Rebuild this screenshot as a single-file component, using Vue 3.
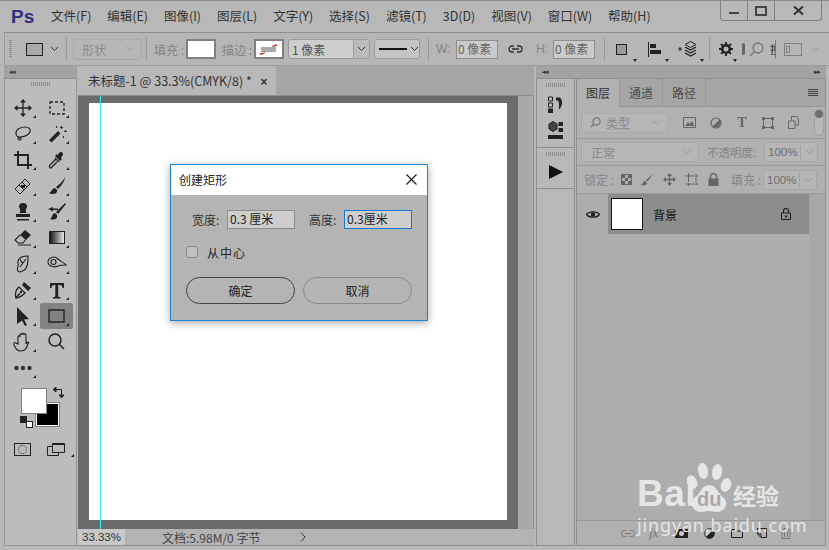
<template>
  <div class="ps">
    <!-- 顶部菜单 -->
    <header class="menubar">
      <span class="logo">Ps</span>
      <nav class="menus">
        <span v-for="m in menus" :key="m">{{ m }}</span>
      </nav>
      <div class="winbtns">
        <span class="winbtn"><i class="min"></i></span>
        <span class="winbtn"><i class="max"></i></span>
        <span class="winbtn close">
          <svg width="11" height="9" viewBox="0 0 11 9"><path d="M1 0.500 10 8.500M10 0.500 1 8.500" stroke="#333" stroke-width="2" /></svg>
        </span>
      </div>
    </header>

    <!-- 选项栏 -->
    <div class="options">
      <span class="grip-v"></span>
      <span class="opt-rect"></span>
      <svg class="chev" width="9" height="6" viewBox="0 0 9 6"><path d="M1 1l3.500 3.500L8 1" fill="none" stroke="#333" /></svg>
      <span class="vline v0"></span>
      <span class="select dim shape">形状<svg width="9" height="6" viewBox="0 0 9 6"><path d="M1 1l3.500 3.500L8 1" fill="none" stroke="#999" /></svg></span>
      <span class="vline v1"></span>
      <span class="dimtext cut">填充 :</span>
      <span class="swatch"></span>
      <span class="dimtext cut stroke-l">描边 :</span>
      <span class="swatch stroke">
        <svg width="22" height="12" viewBox="0 0 22 12">
          <rect x="3" y="4" width="15" height="5" fill="#aaa" />
          <path d="M14 3l5-2v1.500l-4 1.500zM1 11l6-2v1l-4 2z" fill="#d0201f" />
        </svg>
      </span>
      <span class="combo px1"><em>1 像素</em><b><svg width="9" height="6" viewBox="0 0 9 6"><path d="M1 1l3.500 3.500L8 1" fill="none" stroke="#333" /></svg></b></span>
      <span class="combo line"><i></i><svg width="9" height="6" viewBox="0 0 9 6"><path d="M1 1l3.500 3.500L8 1" fill="none" stroke="#333" /></svg></span>
      <span class="vline v15"></span>
      <span class="dimtext wl">W:</span>
      <span class="numbox first">0 像素</span>
      <svg class="link" width="15" height="8" viewBox="0 0 15 8"><path d="M6 1H4a3 3 0 000 6h2M9 1h2a3 3 0 010 6H9M4 4h7" fill="none" stroke="#333" stroke-width="1.300" /></svg>
      <span class="dimtext hl">H:</span>
      <span class="numbox">0 像素</span>
      <span class="vline v2"></span>
      <span class="oicon sq"><i></i></span>
      <span class="oicon al">
        <svg width="14" height="15" viewBox="0 0 14 15"><path d="M0.500 0v15" stroke="#222" /><path d="M2 2h6v4H2zM2 8h11v4H2z" fill="#222" /></svg>
      </span>
      <span class="oicon wide">
        <svg width="19" height="16" viewBox="0 0 19 16"><path d="M0 8h4M2 6v4" stroke="#222" /><path d="M12.500 0.500l5.500 3-5.500 3-5.500-3z" fill="none" stroke="#222" /><path d="M7 6l5.500 3L18 6M7 9l5.500 3L18 9M7 12l5.500 3 5.500-3" fill="none" stroke="#222" stroke-width="1.200" /></svg>
      </span>
      <span class="vline v3"></span>
      <span class="oicon gear">
        <svg width="14" height="14" viewBox="0 0 14 14"><circle cx="7" cy="7" r="3.800" fill="none" stroke="#222" stroke-width="2.600" /><path d="M7 0v14M0 7h14M2 2l10 10M12 2L2 12" stroke="#222" stroke-width="2" stroke-dasharray="2.400 9.200" /></svg>
      </span>
      <span class="bar-cut"></span>
      <svg class="search" width="15" height="15" viewBox="0 0 15 15"><circle cx="9" cy="6" r="5" fill="none" stroke="#777" stroke-width="1.300" /><path d="M5.500 9.500L1 14" stroke="#777" stroke-width="1.500" /></svg>
      <span class="cutglyph">搜</span>
      <span class="panelbtn"><i></i></span>
      <svg class="chev2" width="9" height="6" viewBox="0 0 9 6"><path d="M1 1l3.500 3.500L8 1" fill="none" stroke="#999" /></svg>
    </div>

    <div class="main">
      <!-- 左侧工具栏 -->
      <aside class="toolbar">
        <div class="collapse"><span>◂◂</span></div>
        <div class="tools-inner">
          <div class="grip-h"></div>
          <div class="toolgrid">
            <span v-for="t in tools" :key="t.name" class="tool" :class="{ active: t.active }">
              <svg width="20" height="20" viewBox="0 0 20 20">
                <template v-if="t.name === 'gradient'">
                  <defs>
                    <linearGradient id="gradtool">
                      <stop offset="0" stop-color="#111" />
                      <stop offset="1" stop-color="#eee" />
                    </linearGradient>
                  </defs>
                  <rect x="2.500" y="3.500" width="15" height="12" fill="url(#gradtool)" stroke="#222" />
                </template>
                <path v-if="t.s" :d="t.s" fill="none" stroke="#222" :stroke-width="t.w || 1.300" :stroke-dasharray="t.dash" />
                <path v-if="t.f" :d="t.f" fill="#222" />
              </svg>
              <i v-if="t.more" class="corner"></i>
            </span>
          </div>
          <div class="dots-row">
            <span class="tool">
              <svg width="20" height="20" viewBox="0 0 20 20"><circle cx="3.500" cy="10" r="2.200" fill="#333" /><circle cx="10" cy="10" r="2.200" fill="#333" /><circle cx="16.500" cy="10" r="2.200" fill="#333" /></svg>
              <i class="corner"></i>
            </span>
          </div>
          <div class="colors">
            <span class="bgcolor"></span>
            <span class="fgcolor"></span>
            <svg class="swap" width="11" height="11" viewBox="0 0 11 11"><path d="M0 2.500L3 0v5zM8.500 11L11 8H6zM3 2.500h5.500V8" fill="none" stroke="#222" stroke-width="1" /><path d="M0 2.500L3 0v5zM8.500 11L11 8H6z" fill="#222" /></svg>
            <span class="mini-bg"></span>
            <span class="mini-fg"></span>
          </div>
          <div class="modes">
            <span class="qmask"><i></i></span>
            <span class="screenmode">
              <svg width="18" height="13" viewBox="0 0 18 13"><path d="M0.500 3.500h11v9H0.500z" fill="#bcbcbc" stroke="#222" /><path d="M5.500 0.500h12v9h-12z" fill="#bcbcbc" stroke="#222" /><path d="M5.500 1.500h12" stroke="#222" /></svg>
              <i class="corner"></i>
            </span>
          </div>
        </div>
      </aside>

      <!-- 文档区 -->
      <section class="doc">
        <div class="tabbar">
          <div class="doctab">未标题-1 @ 33.3%(CMYK/8) * <b>×</b></div>
        </div>
        <div class="workspace">
          <div class="paste">
            <div class="canvas"></div>
            <div class="guide"></div>
          </div>
          <div class="vscroll"></div>
        </div>
        <div class="statusbar">
          <span class="zoomval">33.33%</span>
          <span class="docinfo">文档:5.98M/0 字节</span>
          <span class="arrow">
            <svg width="6" height="10" viewBox="0 0 6 10"><path d="M1 0.500L5 5 1 9.500" fill="none" stroke="#333" /></svg>
          </span>
        </div>
      </section>

      <!-- 右侧面板 -->
      <aside class="dock">
        <div class="dockhead"><span>◂◂</span><span>▸▸</span></div>
        <div class="dockbody">
          <div class="strip">
            <div class="strip-group first">
              <div class="grip-h short"></div>
              <svg class="s1" width="16" height="17" viewBox="0 0 16 17"><path d="M0.500 1h4v4h-4zM0.500 7h4v4h-4z" fill="none" stroke="#222" /><path d="M0 12.500h5V17H0z" fill="#222" /><path d="M8 1.500h4c3 3 3 8-1 12-.500-1 1-6-1-9H8z" fill="#222" /></svg>
              <svg class="s2" width="16" height="18" viewBox="0 0 16 18"><path d="M0 14h15v4H0z" fill="#222" /><path d="M1 3l4-2.500L9 3v5l-4 2.500L1 8z" fill="#444" stroke="#222" /><path d="M10.500 1H15v4h-4.500zM10.500 7H15v4h-4.500z" fill="#222" /></svg>
            </div>
            <div class="strip-group second">
              <div class="grip-h short"></div>
              <svg class="play" width="14" height="14" viewBox="0 0 14 14"><path d="M0 0l14 7-14 7z" fill="#111" /></svg>
            </div>
          </div>
          <div class="panel">
            <div class="ptabs">
              <span class="ptab on">图层</span>
              <span class="ptab">通道</span>
              <span class="ptab">路径</span>
              <span class="pmenu"><i></i><i></i><i></i><i></i></span>
            </div>
            <div class="prow filter">
              <span class="select ftype">
                <svg width="11" height="11" viewBox="0 0 11 11"><circle cx="6.500" cy="4.500" r="3.600" fill="none" stroke="#777" stroke-width="1.200" /><path d="M4 7L1 10" stroke="#777" stroke-width="1.400" /></svg>
                <em>类型</em>
                <svg class="sc" width="9" height="6" viewBox="0 0 9 6"><path d="M1 1l3.500 3.500L8 1" fill="none" stroke="#999" /></svg>
              </span>
              <svg class="fi fi1" width="13" height="11" viewBox="0 0 13 11"><path d="M0.500 0.500h12v10H.5z" fill="none" stroke="#666" /><path d="M2 9l3-4 2 2 2-3 2.500 5z" fill="#666" /></svg>
              <svg class="fi fi2" width="12" height="12" viewBox="0 0 12 12"><circle cx="6" cy="6" r="5" fill="none" stroke="#666" stroke-width="1.200" /><path d="M9.500 2.500a5 5 0 01-7 7z" fill="#666" /></svg>
              <span class="fi fi3">T</span>
              <svg class="fi fi4" width="12" height="12" viewBox="0 0 12 12"><path d="M1.500 1.500h9v9h-9z" fill="none" stroke="#666" /><path d="M0 0h3v3H0zM9 0h3v3H9zM0 9h3v3H0zM9 9h3v3H9z" fill="#666" /></svg>
              <svg class="fi fi5" width="11" height="13" viewBox="0 0 11 13"><path d="M3.500 4V0.500h5L10.500 3v6H7" fill="none" stroke="#666" /><path d="M0.500 5h6.500v7.500H0.500z" fill="none" stroke="#666" /></svg>
              <span class="ftoggle"><i></i></span>
            </div>
            <div class="prow blend">
              <span class="select mode">正常<svg width="9" height="6" viewBox="0 0 9 6"><path d="M1 1l3.500 3.500L8 1" fill="none" stroke="#999" /></svg></span>
              <span class="dimtext opac">不透明度:</span>
              <span class="pct"><em>100%</em><b><svg width="9" height="6" viewBox="0 0 9 6"><path d="M1 1l3.500 3.500L8 1" fill="none" stroke="#999" /></svg></b></span>
            </div>
            <div class="prow lock">
              <span class="dimtext lockl">锁定 :</span>
              <svg class="li" width="11" height="11" viewBox="0 0 11 11"><path d="M0.500 0.500h10v10H.5z" fill="#aaa" stroke="#666" /><path d="M1 1h3v3H1zM7 1h3v3H7zM4 4h3v3H4zM1 7h3v3H1zM7 7h3v3H7z" fill="#666" /></svg>
              <svg class="li" width="13" height="13" viewBox="0 0 13 13"><path d="M12.500 0.500L5 7l1.500 1.500zM4 8c-2 0-2 3-4 4 3 1 6 0 6-2.500z" fill="#666" /></svg>
              <svg class="li" width="13" height="13" viewBox="0 0 13 13"><path d="M6.500 1v11M1 6.500h11" stroke="#666" stroke-width="1.300" /><path d="M6.500 0L9 3H4zM6.500 13L4 10h5zM0 6.500L3 4v5zM13 6.500L10 9V4z" fill="#666" /></svg>
              <svg class="li" width="14" height="13" viewBox="0 0 14 13"><path d="M3.500 0v13M0 3h13M11 1v11M1 11h12" stroke="#666" stroke-dasharray="9 1" fill="none" /></svg>
              <svg class="li" width="11" height="13" viewBox="0 0 11 13"><path d="M2.500 6V3.500a3 3 0 016 0V6" fill="none" stroke="#666" stroke-width="1.400" /><path d="M0.500 5.500h10V13H.5z" fill="#666" /></svg>
              <span class="dimtext cut filll">填充 :</span>
              <span class="pct"><em>100%</em><b><svg width="9" height="6" viewBox="0 0 9 6"><path d="M1 1l3.500 3.500L8 1" fill="none" stroke="#999" /></svg></b></span>
            </div>
            <div class="layers">
              <div class="layer-wrap">
                <div class="eye">
                  <svg width="14" height="9" viewBox="0 0 14 9"><path d="M0.500 4.500C3 1 11 1 13.500 4.500 11 8 3 8 0.500 4.500z" fill="none" stroke="#222" stroke-width="1.300" /><circle cx="7" cy="4.500" r="2.200" fill="#222" /></svg>
                </div>
                <div class="layer">
                  <span class="thumb"></span>
                  <span class="lname">背景</span>
                  <svg width="10" height="12" viewBox="0 0 10 12"><path d="M2.500 5V3a2.500 2.500 0 015 0v2" fill="none" stroke="#222" stroke-width="1.200" /><path d="M0.500 5h9v6.500h-9z" fill="none" stroke="#222" /><path d="M4 7.500h2v2H4z" fill="#222" /></svg>
                </div>
              </div>
            </div>
            <div class="pfoot">
              <svg width="14" height="7" viewBox="0 0 14 7"><path d="M5.500 0.500H3.500a3 3 0 000 6h2M8.500 0.500h2a3 3 0 010 6h-2M4 3.500h6" fill="none" stroke="#777" /></svg>
              <span class="fx">fx</span>
              <svg width="13" height="9" viewBox="0 0 13 9"><path d="M0 0h13v9H0z" fill="#222" /><circle cx="6.500" cy="4.500" r="2.500" fill="#ccc" /></svg>
              <svg class="adj" width="11" height="11" viewBox="0 0 11 11"><circle cx="5.500" cy="5.500" r="4.800" fill="#ccc" stroke="#222" /><path d="M9 2a4.800 4.800 0 01-7 7z" fill="#222" /></svg>
              <svg width="12" height="9" viewBox="0 0 12 9"><path d="M0.500 8.500V0.500h4l1 1.500h6v6.500z" fill="none" stroke="#222" /></svg>
              <svg width="10" height="10" viewBox="0 0 10 10"><path d="M0.500 0.500h9v9H4L.5 6z" fill="none" stroke="#222" /><path d="M0.500 6H4v3.500" fill="none" stroke="#222" /></svg>
              <svg width="10" height="11" viewBox="0 0 10 11"><path d="M0 2h10M3 2V.5h4V2M1 3v7.500h8V3M3.500 4v5M6.500 4v5" fill="none" stroke="#777" /></svg>
            </div>
          </div>
        </div>
      </aside>
    </div>

    <!-- 对话框 -->
    <div class="dialog">
      <div class="dlg-title">
        <span>创建矩形</span>
        <svg width="11" height="11" viewBox="0 0 11 11"><path d="M0.500 0.500l10 10M10.500 0.500l-10 10" stroke="#111" stroke-width="1.100" /></svg>
      </div>
      <div class="dlg-body">
        <div class="dlg-row">
          <label>宽度:</label>
          <span class="dlg-input">0.3 厘米</span>
          <label class="second-l">高度:</label>
          <span class="dlg-input focus">0.3厘米</span>
        </div>
        <div class="dlg-check"><i></i><span>从中心</span></div>
        <div class="dlg-btns">
          <span class="dlg-btn primary">确定</span>
          <span class="dlg-btn">取消</span>
        </div>
      </div>
    </div>

    <!-- 水印 -->
    <div class="watermark">
      <div class="wm-top">
        <span class="wm-bai">Bai</span>
        <svg class="wm-paw" width="46" height="54" viewBox="0 0 46 54">
          <ellipse cx="5" cy="20" rx="5" ry="7" transform="rotate(-25 5 20)" fill="#e6e6e6" />
          <ellipse cx="16" cy="9" rx="5" ry="8" transform="rotate(-10 16 9)" fill="#e6e6e6" />
          <ellipse cx="30" cy="10" rx="5" ry="8" transform="rotate(10 30 10)" fill="#e6e6e6" />
          <ellipse cx="39" cy="23" rx="5" ry="7" transform="rotate(20 39 23)" fill="#e6e6e6" />
          <path d="M22 23c8 0 9 9 14 12 6 5 3 15-6 15-3 0-5-1-8-1s-5 1-8 1C5 50 2 40 8 35c6-3 6-12 14-12z" fill="#e6e6e6" />
        </svg>
        <span class="wm-du">du</span>
        <span class="wm-cn">经验</span>
      </div>
      <div class="wm-url">jingyan.baidu.com</div>
    </div>
  </div>
</template>

<script setup>
// 工具栏图标，两列排列，按截图顺序
const menus = ['文件(F)', '编辑(E)', '图像(I)', '图层(L)', '文字(Y)', '选择(S)', '滤镜(T)', '3D(D)', '视图(V)', '窗口(W)', '帮助(H)']

const tools = [
  { name: 'move', more: true, s: 'M10 2v16M2 10h16', f: 'M10 1l3 3.500H7zM10 19l-3-3.500h6zM1 10l3.500-3v6zM19 10l-3.500 3v-6z' },
  { name: 'marquee', more: true, s: 'M3 4h14v12H3z', dash: '3 2', w: 1.300 },
  { name: 'lasso', more: true, s: 'M3 9c0-4 5-6 9-6s6 2 5 5-6 5-10 5-4-2-4-4zM6 13c-2 1-1 3 1 3s1-3-1-2', w: 1.200 },
  { name: 'wand', more: true, f: 'M2 16l9-9 2.500 2.500-9 9zM14 2h1v3h-1zM13 3h3v1h-3zM18 6h1v2h-1zM17 7h3v.8h-3zM16 12h1v2h-1zM9 2h1v2H9z' },
  { name: 'crop', more: true, w: 2, s: 'M5 1v14h14M1 5h14v14' },
  { name: 'eyedropper', more: true, s: 'M9 9l-6 6c-1 1-1 3 1 3l6-6M8 8l4 4', f: 'M12 3c2-3 6 1 3 3l-1 2 1 1-2 2-5-5 2-2 1 1z' },
  { name: 'heal', more: true, s: 'M2 13L12 3l5 5L7 18zM6 9l5 5M9 6l5 5', f: 'M8 9h4v3H8z', w: 1 },
  { name: 'brush', more: true, f: 'M18 1c-1 3-6 8-9 10l2 2c3-3 7-8 7-12zM8 12c-3 0-3 4-6 5 3 2 9 1 8-3z' },
  { name: 'stamp', more: true, f: 'M10 1a3.500 3.500 0 013 6c-.500 1 0 3 .500 4H6.500c.500-1 1-3 .500-4a3.500 3.500 0 013-6zM3 12h14v3H3zM4 17h12v1.500H4z' },
  { name: 'history', more: true, f: 'M18 1l1 1-8 10-2-2zM8 11c-3 0-2 4-5 6 3 1 8 1 7-4zM1 7l5-2v1.500h5V8H6v1.500z' },
  { name: 'eraser', more: true, s: 'M7 7l-5 5 3 3h5l3-4M5 17h13', f: 'M12 2l6 5-5 5-6-5z', w: 1.100 },
  { name: 'gradient', more: true },
  { name: 'smudge', more: true, s: 'M15 2c-4 0-9 1-10 5-1 2 1 3 0 5-1 3-1 6 2 6 5-1 8-5 8-12zM13 5l-6 8M7 5c1 2 1 3 3 4', w: 1.100 },
  { name: 'dodge', more: true, s: 'M1 8c0-4 6-7 10-3 2 2 5 3 8 6-3 0-5 0-8 1-4 2-10 0-10-4zM9 8a2.500 2.500 0 10-5 0 2.500 2.500 0 005 0z', w: 1.100 },
  { name: 'pen', more: true, s: 'M3 18c-1-4-1-8 3-11l6 6c-3 3-6 5-9 5zM3 18l4-5', f: 'M11 2l7 6-3 3-6-6zM7 11h2v2H7z', w: 1.300 },
  { name: 'text', more: true, f: 'M3 3h14v5h-1.500c0-2-1-3-3-3h-1.300v11c0 1 .800 1 2.300 1v1.500H6V17c1.500 0 2.300 0 2.300-1V5H7.500c-2 0-3 1-3 3H3z' },
  { name: 'select', more: true, f: 'M4 1l12 12-5 .500 3 5.500-2 1-3-5.500-5 3.500z' },
  { name: 'rect', more: true, active: true, s: 'M2 4h15v12H2z', w: 1.400 },
  { name: 'hand', more: true, s: 'M5 12V5c0-1.500 2-1.500 2 0V3c0-1.500 2-1.500 2 0v-.500c0-1.500 2-1.500 2 0V3c0-1.500 2-1.500 2 0v9c1-2 4-3 2 0-2 5-3 7-7 7s-5-2-7-6c-1-2 1-3 2-2z', w: 1.100 },
  { name: 'zoom', s: 'M8 2a6 6 0 100 12A6 6 0 008 2zM12 12l5 5', w: 1.500 }
]
</script>

<style>
html, body {
  margin: 0;
  background: #b8b8b8;
}
</style>

<style scoped>
.ps {
  position: relative;
  width: 829px;
  height: 550px;
  overflow: hidden;
  display: flex;
  flex-direction: column;
  background: #b8b8b8;
  font-family: "Noto Sans CJK SC", "Liberation Sans", sans-serif;
  color: #222;
  font-size: 12px;
}

/* 菜单栏 */
.menubar {
  height: 32px;
  flex: none;
  display: flex;
  align-items: center;
  border-top: 1px solid #8c8c8c;
  box-sizing: border-box;
}
.logo {
  width: 51px;
  padding-left: 11px;
  box-sizing: border-box;
  font: bold 19px "Liberation Sans", sans-serif;
  color: #31307f;
  flex: none;
}
.menus {
  display: flex;
  gap: 15.900px;
  font-size: 12.500px;
  color: #333;
  margin-top: -2px;
}
.winbtns {
  margin-left: auto;
  margin-right: 7px;
  align-self: flex-start;
  display: flex;
  height: 19px;
  border: 1px solid #808080;
  border-top: none;
  border-radius: 0 0 4px 4px;
}
.winbtn {
  width: 26px;
  display: flex;
  align-items: center;
  justify-content: center;
  border-right: 1px solid #808080;
}
.winbtn.close {
  width: 46px;
  border-right: none;
}
.min {
  width: 10px;
  height: 2px;
  margin-top: 5px;
  background: #444;
}
.max {
  width: 8px;
  height: 6px;
  border: 2px solid #444;
}

/* 选项栏 */
.options {
  height: 34px;
  margin: 0 0 0 4px;
  flex: none;
  display: flex;
  align-items: center;
  box-sizing: border-box;
  border-top: 1px solid #8e8e8e;
  border-left: 1px solid #9b9b9b;
  border-bottom: 1px solid #9b9b9b;
  background: #b6b6b6;
}
.grip-v {
  width: 3px;
  height: 18px;
  margin-left: 4px;
  background: repeating-linear-gradient(#8e8e8e 0 1px, transparent 1px 2px);
}
.opt-rect {
  width: 15px;
  height: 11px;
  margin-left: 14px;
  border: 1px solid #222;
  background: #aaa;
}
.chev {
  margin-left: 7px;
}
.vline {
  width: 1px;
  height: 24px;
  background: #9a9a9a;
  flex: none;
}
.v0 {
  margin: 0 6px 0 7px;
}
.v1 {
  margin: 0 7px 0 4px;
}
.v15 {
  margin: 0 7px 0 8px;
}
.v2 {
  margin: 0 11px 0 9px;
}
.v3 {
  margin: 0 9px 0 12px;
}
.select {
  display: inline-flex;
  align-items: center;
  box-sizing: border-box;
  border: 1px solid #a9a9a9;
  border-radius: 3px;
  background: #b6b6b6;
  color: #8a8a8a;
  flex: none;
}
.select.shape {
  width: 69px;
  height: 21px;
  justify-content: space-between;
  padding: 0 6px 0 8px;
}
.dimtext {
  color: #848484;
  font-size: 12px;
  white-space: nowrap;
  flex: none;
}
.dimtext.cut {
  width: 32px;
}
.swatch {
  width: 30px;
  height: 20px;
  flex: none;
  box-sizing: border-box;
  border: 2px solid #808080;
  background: #fff;
  display: flex;
  align-items: center;
  justify-content: center;
}
.stroke-l {
  margin-left: 6px;
}
.combo {
  display: flex;
  align-items: center;
  box-sizing: border-box;
  height: 20px;
  border: 1px solid #9a9a9a;
  border-radius: 3px;
  background: #cecece;
  margin-left: 4px;
  flex: none;
}
.combo em {
  flex: 1;
  font-style: normal;
  padding-left: 3px;
  color: #555;
}
.combo b {
  width: 15px;
  height: 18px;
  border-left: 1px solid #9a9a9a;
  background: #bbb;
  display: flex;
  align-items: center;
  justify-content: center;
  border-radius: 0 3px 3px 0;
}
.px1 {
  width: 82px;
}
.line {
  width: 46px;
  background: #c4c4c4;
  gap: 3px;
  padding-left: 4px;
}
.line i {
  width: 28px;
  height: 2px;
  background: #111;
}
.wl,
.hl {
  width: 14px;
  font-family: "Liberation Sans", sans-serif;
}
.numbox {
  width: 42px;
  height: 19px;
  box-sizing: border-box;
  margin-left: 3px;
  border: 1px solid #8e8e8e;
  background: #cacaca;
  color: #666;
  line-height: 16px;
  padding-left: 1px;
  white-space: nowrap;
  flex: none;
}
.numbox.first {
  margin-left: 6px;
}
.link {
  margin: 0 13px 0 10px;
  flex: none;
}
.oicon {
  position: relative;
  width: 14px;
  height: 15px;
  flex: none;
  display: flex;
  align-items: center;
  justify-content: center;
}
.oicon::after {
  content: "";
  position: absolute;
  right: -7px;
  bottom: -5px;
  border: 2.500px solid transparent;
  border-top: 3px solid #222;
  border-bottom: none;
}
.oicon.sq {
  margin-right: 18px;
  justify-content: flex-start;
}
.oicon.sq i {
  width: 9px;
  height: 9px;
  border: 1px solid #222;
  background: #9a9a9a;
}
.oicon.al {
  margin-right: 16px;
}
.oicon.wide {
  width: 19px;
}
.oicon.gear {
  margin-right: 8px;
}
.oicon.gear::after {
  right: -4px;
}
.bar-cut {
  width: 3px;
  height: 12px;
  border-radius: 2px;
  background: #666;
  margin-left: 1px;
  flex: none;
}
.search {
  margin-left: 4px;
  flex: none;
}
.cutglyph {
  width: 5px;
  margin-left: 6px;
  overflow: hidden;
  font-size: 11px;
  line-height: 18px;
  color: #222;
  border-right: 1px solid #777;
  white-space: nowrap;
  flex: none;
}
.panelbtn {
  width: 15px;
  height: 11px;
  margin-left: 8px;
  border: 1px solid #808080;
  display: flex;
  align-items: center;
  padding-left: 1px;
  flex: none;
}
.panelbtn i {
  width: 2px;
  height: 5px;
  border: 1px solid #808080;
}
.chev2 {
  margin-left: 9px;
  flex: none;
}

.main {
  flex: 1;
  min-height: 0;
  display: flex;
}

/* 工具栏 */
.toolbar {
  width: 74px;
  flex: none;
  margin-left: 4px;
  padding-right: 1px;
  box-sizing: border-box;
  display: flex;
  flex-direction: column;
  padding-bottom: 4px;
}
.collapse {
  height: 12px;
  flex: none;
  background: #a2a2a2;
  border-bottom: 1px solid #8f8f8f;
  font-size: 7px;
  line-height: 11px;
  padding-left: 5px;
  color: #333;
  letter-spacing: -1px;
  overflow: hidden;
}
.tools-inner {
  flex: 1;
  border-left: 1px solid #959595;
  border-right: 1px solid #959595;
  border-bottom: 1px solid #959595;
  background: #bcbcbc;
}
.grip-h {
  width: 20px;
  height: 4px;
  margin: 3px auto 0;
  background: repeating-linear-gradient(90deg, #8e8e8e 0 1px, transparent 1px 2px);
}
.grip-h.short {
  margin-top: 4px;
}
.toolgrid {
  margin-top: 9px;
  display: grid;
  grid-template-columns: 35px 33px;
  grid-auto-rows: 26px;
}
.tool {
  position: relative;
  display: flex;
  align-items: center;
  justify-content: center;
  height: 26px;
  border-radius: 2px;
}
.tool.active {
  background: #828282;
}
.corner {
  position: absolute;
  right: 4px;
  bottom: 3px;
  border-left: 3px solid transparent;
  border-bottom: 3px solid #222;
}
.dots-row {
  width: 35px;
}
.colors {
  position: relative;
  height: 45px;
  margin-top: 6px;
}
.bgcolor {
  position: absolute;
  left: 31px;
  top: 16px;
  width: 21px;
  height: 21px;
  border: 1px solid #fff;
  outline: 1px solid #808080;
  background: #000;
}
.fgcolor {
  position: absolute;
  left: 16px;
  top: 1px;
  width: 24px;
  height: 24px;
  border: 1px solid #808080;
  background: #fff;
}
.swap {
  position: absolute;
  left: 48px;
  top: 0;
}
.mini-bg {
  position: absolute;
  left: 21px;
  top: 34px;
  width: 5px;
  height: 5px;
  border: 1px solid #222;
  background: #fff;
}
.mini-fg {
  position: absolute;
  left: 15px;
  top: 29px;
  width: 7px;
  height: 7px;
  background: #222;
}
.modes {
  display: flex;
  align-items: center;
  margin: 11px 0 0 9px;
  gap: 16px;
}
.qmask {
  width: 15px;
  height: 11px;
  border: 1px solid #222;
  display: flex;
  align-items: center;
  justify-content: center;
}
.qmask i {
  width: 7px;
  height: 7px;
  border: 1px dotted #333;
  border-radius: 50%;
}
.screenmode {
  position: relative;
  display: flex;
  padding-right: 6px;
}
.screenmode .corner {
  right: -3px;
  bottom: -1px;
}

/* 文档区 */
.doc {
  width: 456px;
  flex: none;
  display: flex;
  flex-direction: column;
  padding-bottom: 4px;
  box-sizing: border-box;
}
.tabbar {
  height: 30px;
  flex: none;
  background: #a5a5a5;
  border-bottom: 1px solid #8f8f8f;
  box-sizing: border-box;
  display: flex;
}
.doctab {
  width: 198px;
  background: #b8b8b8;
  line-height: 30px;
  padding-left: 10px;
  box-sizing: border-box;
  white-space: nowrap;
  color: #333;
  font-size: 12.500px;
}
.doctab b {
  margin-left: 6px;
  font: bold 12px "Liberation Sans", sans-serif;
}
.workspace {
  flex: 1;
  min-height: 0;
  display: flex;
}
.paste {
  position: relative;
  flex: 1;
  background: #6b6b6b;
  padding: 7px 11px;
  box-sizing: border-box;
}
.canvas {
  width: 418px;
  height: 417px;
  background: #fff;
}
.guide {
  position: absolute;
  left: 22px;
  top: 0;
  bottom: 0;
  width: 1px;
  background: #2ef5f5;
}
.vscroll {
  width: 17px;
  box-sizing: border-box;
  background: #a9a9a9;
  border-right: 1px solid #8f8f8f;
}
.statusbar {
  height: 17px;
  flex: none;
  display: flex;
  align-items: center;
  background: #b3b3b3;
  border-bottom: 1px solid #8f8f8f;
  box-sizing: border-box;
  font-size: 12px;
}
.zoomval {
  width: 47px;
  height: 16px;
  line-height: 16px;
  background: #c8c8c8;
  text-align: center;
  font-family: "Liberation Sans", sans-serif;
  font-size: 11.500px;
  color: #333;
  flex: none;
}
.docinfo {
  margin-left: 37px;
  color: #444;
  width: 135px;
}
.arrow {
  display: flex;
  margin-left: 3px;
}

/* 面板 */
.dock {
  flex: 1;
  margin-left: 2px;
  display: flex;
  flex-direction: column;
  padding-bottom: 4px;
  box-sizing: border-box;
}
.dockhead {
  height: 12px;
  flex: none;
  display: flex;
  justify-content: space-between;
  padding: 0 6px;
  margin-right: 3px;
  background: #a2a2a2;
  border-bottom: 1px solid #8f8f8f;
  font-size: 7px;
  line-height: 11px;
  letter-spacing: -1px;
  color: #333;
  overflow: hidden;
}
.dockbody {
  flex: 1;
  min-height: 0;
  display: flex;
}
.strip {
  width: 39px;
  flex: none;
  background: #b8b8b8;
  border-left: 1px solid #8f8f8f;
  border-right: 1px solid #8f8f8f;
  border-bottom: 1px solid #8f8f8f;
  box-sizing: border-box;
}
.strip-group {
  display: flex;
  flex-direction: column;
  align-items: center;
  border-bottom: 1px solid #8f8f8f;
  box-sizing: border-box;
}
.strip-group.first {
  height: 69px;
}
.strip-group.second {
  height: 41px;
}
.s1 {
  margin-top: 9px;
}
.s2 {
  margin-top: 8px;
}
.play {
  margin-top: 9px;
}
.panel {
  width: 248px;
  margin-left: 1px;
  display: flex;
  flex-direction: column;
  background: #b1b1b1;
  border-left: 1px solid #8f8f8f;
  border-right: 1px solid #8f8f8f;
  border-bottom: 1px solid #8f8f8f;
}
.ptabs {
  height: 28px;
  flex: none;
  display: flex;
  align-items: center;
  background: #a5a5a5;
  border-bottom: 1px solid #959595;
  box-sizing: border-box;
}
.ptab {
  width: 43px;
  height: 28px;
  line-height: 27px;
  text-align: center;
  border-right: 1px solid #959595;
  color: #4a4a4a;
  box-sizing: border-box;
}
.ptab.on {
  background: #b1b1b1;
  color: #333;
}
.pmenu {
  margin-left: auto;
  margin-right: 7px;
  display: flex;
  flex-direction: column;
  gap: 1px;
}
.pmenu i {
  width: 10px;
  height: 1px;
  background: #444;
}
.prow {
  display: flex;
  align-items: center;
  box-sizing: border-box;
  border-bottom: 1px solid #999;
  flex: none;
}
.filter {
  height: 32px;
  padding-left: 4px;
}
.ftype {
  width: 87px;
  height: 20px;
  gap: 5px;
  padding: 0 6px 0 8px;
}
.ftype em {
  font-style: normal;
  text-decoration: underline;
  text-decoration-color: #aaa;
}
.sc {
  margin-left: auto;
}
.fi {
  margin-left: 14px;
  flex: none;
}
.fi1 {
  margin-left: 15px;
}
.fi3 {
  font: bold 14px "Liberation Serif", serif;
  color: #666;
  width: 12px;
  text-align: center;
}
.ftoggle {
  margin-left: 15px;
  width: 8px;
  height: 25px;
  border: 1px solid #a2a2a2;
  border-radius: 5px;
  position: relative;
  background: #b8b8b8;
  flex: none;
}
.ftoggle i {
  position: absolute;
  left: 0;
  top: 0;
  width: 8px;
  height: 8px;
  border-radius: 50%;
  background: #6e6e6e;
}
.blend {
  height: 27px;
  padding-left: 4px;
}
.mode {
  width: 118px;
  height: 20px;
  justify-content: space-between;
  padding: 0 6px 0 9px;
}
.opac {
  margin-left: 8px;
  font-size: 11.500px;
  width: 57px;
}
.pct {
  display: flex;
  align-items: center;
  width: 54px;
  height: 20px;
  box-sizing: border-box;
  border: 1px solid #a5a5a5;
  border-radius: 3px;
  background: #b6b6b6;
  flex: none;
}
.pct em {
  flex: 1;
  font-style: normal;
  color: #6e6e6e;
  padding-left: 3px;
  font-family: "Liberation Sans", sans-serif;
  font-size: 11.500px;
}
.pct b {
  width: 16px;
  height: 18px;
  display: flex;
  align-items: center;
  justify-content: center;
  border-left: 1px solid #a5a5a5;
}
.lock {
  height: 28px;
  padding-left: 7px;
}
.lockl {
  width: 37px;
}
.li {
  margin-right: 9px;
  flex: none;
}
.filll {
  margin-left: 3px;
}
.layers {
  flex: 1;
  min-height: 0;
  background: linear-gradient(90deg, #adadad 0 232px, #a8a8a8 232px);
}
.layer-wrap {
  display: flex;
  height: 40px;
  padding-right: 16px;
}
.eye {
  width: 31px;
  display: flex;
  align-items: center;
  justify-content: center;
}
.layer {
  flex: 1;
  display: flex;
  align-items: center;
  background: #8d8d8d;
  padding: 0 18px 0 3px;
}
.thumb {
  width: 30px;
  height: 30px;
  border: 1px solid #111;
  background: #fff;
}
.lname {
  margin-left: 10px;
  flex: 1;
  color: #111;
}
.pfoot {
  height: 25px;
  flex: none;
  display: flex;
  align-items: center;
  padding-left: 44px;
  gap: 14px;
  border-top: 1px solid #999;
  box-sizing: border-box;
}
.fx {
  font: italic 13px "Liberation Serif", serif;
  color: #777;
  width: 12px;
}
.adj {
  margin: 0 2px;
}

/* 对话框 */
.dialog {
  position: absolute;
  left: 170px;
  top: 164px;
  width: 258px;
  height: 157px;
  box-sizing: border-box;
  border: 1px solid #1a83d8;
  background: #b4b4b4;
  box-shadow: 0 2px 8px rgba(0, 0, 0, 0.35);
}
.dlg-title {
  height: 30px;
  background: #fff;
  display: flex;
  align-items: center;
  justify-content: space-between;
  padding: 0 10px 2px 8px;
  box-sizing: border-box;
  font-size: 12px;
  color: #222;
}
.dlg-body {
  padding: 15px 15px 0;
}
.dlg-row {
  display: flex;
  align-items: center;
  color: #222;
}
.dlg-row label {
  margin-left: 6px;
  width: 35px;
  color: #333;
  white-space: nowrap;
}
.dlg-row .second-l {
  margin-left: 14px;
  width: 35px;
}
.dlg-input {
  width: 68px;
  height: 19px;
  line-height: 16px;
  box-sizing: border-box;
  border: 1px solid #8e8e8e;
  background: #cecece;
  padding-left: 2px;
  color: #222;
  font-size: 12px;
  white-space: nowrap;
}
.dlg-input.focus {
  border-color: #1a78d6;
}
.dlg-check {
  margin-top: 14px;
  display: flex;
  align-items: center;
  height: 18px;
}
.dlg-check i {
  width: 10px;
  height: 10px;
  border: 1px solid #8a8a8a;
  border-radius: 2px;
  background: #c0c0c0;
}
.dlg-check span {
  margin-left: 9px;
  letter-spacing: 1px;
  color: #222;
}
.dlg-btns {
  margin-top: 16px;
  display: flex;
  gap: 8px;
}
.dlg-btn {
  width: 109px;
  height: 27px;
  line-height: 25px;
  box-sizing: border-box;
  text-align: center;
  border: 1px solid #8a8a8a;
  border-radius: 14px;
  color: #222;
}
.dlg-btn.primary {
  border-color: #444;
}

/* 水印 */
.watermark {
  position: absolute;
  left: 637px;
  top: 462px;
  width: 150px;
  color: #e6e6e6;
  pointer-events: none;
}
.wm-top {
  position: relative;
  height: 52px;
  font-family: "Liberation Sans", sans-serif;
  font-weight: bold;
}
.wm-bai {
  position: absolute;
  left: 0;
  top: 14px;
  font-size: 37px;
  line-height: 36px;
  letter-spacing: 0.500px;
}
.wm-paw {
  position: absolute;
  left: 50px;
  top: 0;
}
.wm-du {
  position: absolute;
  left: 60px;
  top: 26px;
  font-size: 20px;
  line-height: 22px;
  color: #a9a9a9;
}
.wm-cn {
  position: absolute;
  left: 96px;
  top: 20px;
  font: bold 23px/26px "Noto Sans CJK SC", sans-serif;
}
.wm-url {
  margin-top: 1px;
  font: 18px/20px "Noto Sans", sans-serif;
  letter-spacing: 0.850px;
  white-space: nowrap;
}
</style>
